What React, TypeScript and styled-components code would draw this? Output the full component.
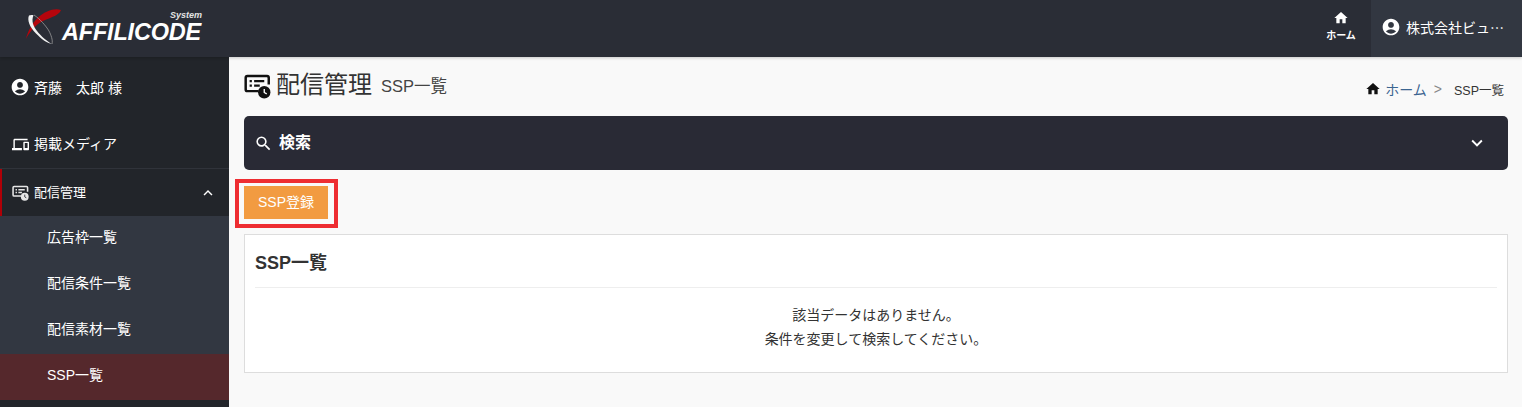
import React from "react";
import styled, { createGlobalStyle } from "styled-components";
import { MdAccountCircle, MdExpandLess, MdExpandMore, MdHome, MdOutlineDevices, MdSearch } from "react-icons/md";

const GlobalStyle = createGlobalStyle`
  html, body {
    margin: 0;
    padding: 0;
    background: #f9f9f9;
  }
  body {
    font-family: "Liberation Sans", "Noto Sans CJK JP", sans-serif;
    color: #333;
    overflow: hidden;
  }
  * { box-sizing: border-box; }
`;

const Page = styled.div`
  width: 1522px;
  height: 407px;
  display: flex;
  flex-direction: column;
  overflow: hidden;
`;

const Header = styled.header`
  height: 57px;
  flex: none;
  display: flex;
  align-items: stretch;
  background: #2a2d36;
  box-shadow: 0 1px 3px rgba(0, 0, 0, 0.2);
  position: relative;
  z-index: 2;
`;

const LogoArea = styled.div`
  width: 229px;
  padding: 8px 0 0 25px;
  display: flex;
  align-items: flex-start;
`;

const LogoWords = styled.div`
  display: flex;
  flex-direction: column;
  align-items: flex-end;
  margin-left: -1px;
  font-style: italic;
  font-weight: 700;
  color: #fff;
`;

const LogoSystem = styled.span`
  font-size: 9px;
  line-height: 9px;
  height: 9px;
  margin-top: 3px;
  margin-right: -1px;
  color: #e4e4e4;
`;

const LogoName = styled.span`
  font-size: 23.5px;
  line-height: 24px;
  letter-spacing: -0.2px;
`;

const HeaderSpacer = styled.div`
  flex: 1;
`;

const HomeLink = styled.a`
  width: 60px;
  display: flex;
  flex-direction: column;
  align-items: center;
  padding-top: 10px;
  color: #fff;
  font-size: 10px;
  font-weight: 700;
  line-height: 14px;
  svg { margin-bottom: 3px; }
`;

const ProfileLink = styled.a`
  width: 151px;
  display: flex;
  align-items: center;
  gap: 5px;
  padding: 0 14px 3px 10px;
  background: #323741;
  color: #fff;
  font-size: 14px;
`;

const ProfileName = styled.span`
  font-family: "Noto Sans CJK JP", sans-serif;
  white-space: nowrap;
`;

const Body = styled.div`
  flex: 1;
  display: flex;
  min-height: 0;
`;

const Sidebar = styled.nav`
  width: 229px;
  flex: none;
  background: #22252a;
  color: #fff;
  display: flex;
  flex-direction: column;
`;

const UserRow = styled.div`
  height: 64px;
  display: flex;
  align-items: center;
  gap: 4px;
  padding: 0 0 4px 10px;
  font-size: 14px;
  white-space: pre;
`;

const MenuRow = styled.div<{ $active?: boolean; $border?: boolean }>`
  height: ${({ $active }) => ($active ? "47px" : "48px")};
  display: flex;
  align-items: center;
  gap: 5px;
  padding: 0 12px 0 ${({ $active }) => ($active ? "10px" : "12px")};
  font-size: ${({ $active }) => ($active ? "13px" : "14px")};
  border-left: ${({ $active }) => ($active ? "2px solid #b00007" : "0")};
  border-bottom: ${({ $border }) => ($border ? "1px solid #30333a" : "0")};
`;

const MenuLabel = styled.span`
  flex: 1;
  margin-bottom: 3px;
`;

const SubMenu = styled.div`
  background: #323741;
  display: flex;
  flex-direction: column;
`;

const SubRow = styled.div<{ $current?: boolean }>`
  height: 46px;
  display: flex;
  align-items: center;
  padding: 0 0 6px 47px;
  font-size: 14px;
  background: ${({ $current }) => ($current ? "#55282c" : "transparent")};
`;

const Main = styled.main`
  flex: 1;
  padding: 0 14px 0 15px;
  background: #f9f9f9;
`;

const TitleRow = styled.div`
  height: 59px;
  display: flex;
  align-items: flex-start;
  padding-top: 13px;
`;

const TitleIcon = styled.span`
  display: flex;
  margin-top: 2px;
`;

const PageTitle = styled.h1`
  margin: 0 0 0 5px;
  font-size: 24px;
  line-height: 30px;
  font-weight: 400;
  color: #333;
`;

const PageSub = styled.span`
  margin: 2px 0 0 9px;
  font-size: 16.5px;
  line-height: 28px;
  color: #444;
`;

const Crumbs = styled.div`
  margin-left: auto;
  margin-top: 10px;
  margin-right: 4px;
  display: flex;
  align-items: center;
  height: 18px;
  font-size: 12.5px;
  color: #333;
`;

const CrumbLink = styled.a`
  color: #3c6591;
  font-size: 14px;
  margin-left: 4px;
`;

const CrumbSep = styled.span`
  color: #888;
  margin: 0 12px 0 7px;
  font-size: 14px;
`;

const SearchBar = styled.div`
  height: 54px;
  display: flex;
  align-items: center;
  padding: 0 20px 0 10px;
  gap: 6px;
  background: #292a35;
  border-radius: 5px;
  color: #fff;
`;

const SearchLabel = styled.span`
  flex: 1;
  margin-bottom: 5px;
  font-size: 16px;
  font-weight: 700;
`;

const ButtonRow = styled.div`
  height: 64px;
  display: flex;
  align-items: flex-start;
  padding-top: 16px;
`;

const PrimaryButton = styled.button`
  position: relative;
  width: 84px;
  height: 33px;
  padding: 0 0 4px;
  border: 0;
  background: #f29b41;
  color: #fff;
  font: inherit;
  font-size: 14px;

  /* 注記の赤枠 */
  &::after {
    content: "";
    position: absolute;
    inset: -7px -10px -9px -9px;
    border: 4px solid #ee2d32;
  }
`;

const Panel = styled.section`
  height: 139px;
  background: #fff;
  border: 1px solid #ddd;
  padding: 0 10px;
`;

const PanelTitle = styled.h2`
  margin: 0;
  height: 53px;
  display: flex;
  align-items: center;
  border-bottom: 1px solid #eee;
  font-size: 18px;
  font-weight: 700;
  color: #333;
`;

const EmptyText = styled.p`
  margin: 15px 0 0;
  text-align: center;
  font-size: 14px;
  line-height: 24px;
  color: #333;
`;

const Swoosh = () => (
  <svg width="38" height="38" viewBox="25 8 38 38" style={{ flex: "none" }}>
    <path d="M61 10C55 7.5 45 11 38.5 17C32 23 27.5 32 26 39C28 34.5 33 27.5 39.5 23C47 18 59 16.5 61 10Z" fill="#b5050c" />
    <path d="M29 15.5C27 20 29.5 27 36 33.5C41 38.5 47 43.5 52 44C47 41.5 41 36 37 31C33.5 26.5 31 21 33.5 15.2C32.5 14.8 30 14.7 29 15.5Z" fill="#f2f2f2" />
    <path d="M34 15C40 19 46 26 49 31C51 35 53 40 52 44" fill="none" stroke="#9a9a9a" strokeWidth="0.8" />
  </svg>
);

const DeliveryIcon = ({ size, color, dot }: { size: number; color: string; dot: string }) => (
  <svg width={size} height={size} viewBox="0 0 24 24" style={{ flex: "none" }}>
    <path d="M13 17H3A1.5 1.5 0 0 1 1.5 15.5V5A1.5 1.5 0 0 1 3 3.5H20.5A1.5 1.5 0 0 1 22 5V11" fill="none" stroke={color} strokeWidth="2.2" />
    <path d="M5 7h2v2H5zM9 7h9v2H9zM5 11h2v2H5zM9 11h5v2H9z" fill={color} />
    <circle cx="18" cy="18" r="5.5" fill={color} />
    <path d="M18 15v3.2l2.2 1.3" fill="none" stroke={dot} strokeWidth="1.2" />
  </svg>
);

export default function App() {
  return (
    <Page>
      <GlobalStyle />
      <Header>
        <LogoArea>
          <Swoosh />
          <LogoWords>
            <LogoSystem>System</LogoSystem>
            <LogoName>AFFILICODE</LogoName>
          </LogoWords>
        </LogoArea>
        <HeaderSpacer />
        <HomeLink>
          <MdHome size={16} />
          ホーム
        </HomeLink>
        <ProfileLink>
          <MdAccountCircle size={20} style={{ flex: "none" }} />
          <ProfileName>株式会社ビュ…</ProfileName>
        </ProfileLink>
      </Header>
      <Body>
        <Sidebar>
          <UserRow>
            <MdAccountCircle size={20} />
            斉藤　太郎 様
          </UserRow>
          <MenuRow $border>
            <MdOutlineDevices size={17} />
            <MenuLabel>掲載メディア</MenuLabel>
          </MenuRow>
          <MenuRow $active>
            <DeliveryIcon size={17} color="#e6e6e6" dot="#22252a" />
            <MenuLabel>配信管理</MenuLabel>
            <MdExpandLess size={18} />
          </MenuRow>
          <SubMenu>
            <SubRow>広告枠一覧</SubRow>
            <SubRow>配信条件一覧</SubRow>
            <SubRow>配信素材一覧</SubRow>
            <SubRow $current>SSP一覧</SubRow>
          </SubMenu>
        </Sidebar>
        <Main>
          <TitleRow>
            <TitleIcon>
              <DeliveryIcon size={27} color="#111" dot="#fff" />
            </TitleIcon>
            <PageTitle>配信管理</PageTitle>
            <PageSub>SSP一覧</PageSub>
            <Crumbs>
              <MdHome size={16} color="#111" />
              <CrumbLink>ホーム</CrumbLink>
              <CrumbSep>&gt;</CrumbSep>
              SSP一覧
            </Crumbs>
          </TitleRow>
          <SearchBar>
            <MdSearch size={19} />
            <SearchLabel>検索</SearchLabel>
            <MdExpandMore size={22} />
          </SearchBar>
          <ButtonRow>
            <PrimaryButton>SSP登録</PrimaryButton>
          </ButtonRow>
          <Panel>
            <PanelTitle>SSP一覧</PanelTitle>
            <EmptyText>
              該当データはありません。
              <br />
              条件を変更して検索してください。
            </EmptyText>
          </Panel>
        </Main>
      </Body>
    </Page>
  );
}
